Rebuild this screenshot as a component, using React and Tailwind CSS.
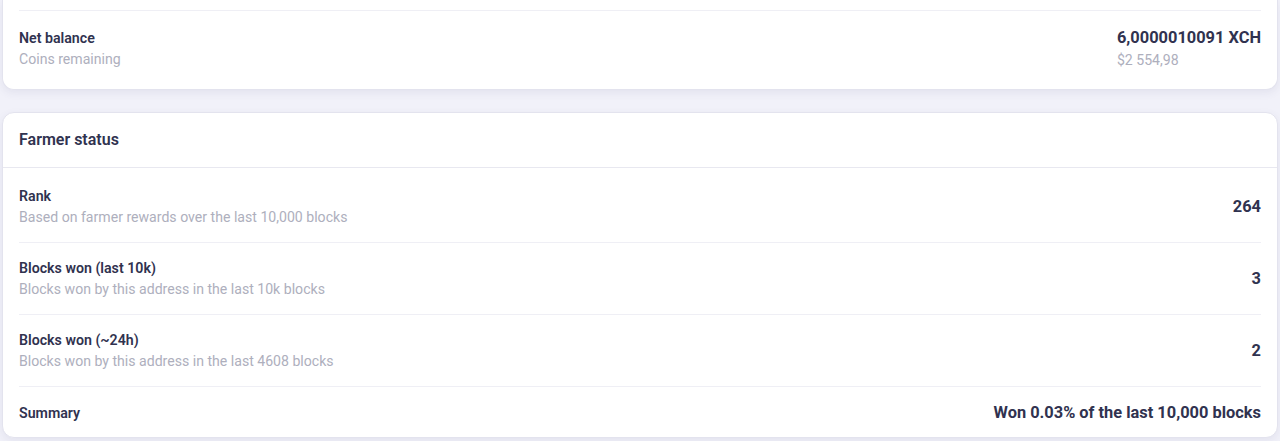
const rows = [
  {
    title: 'Rank',
    hint: 'Based on farmer rewards over the last 10,000 blocks',
    value: '264',
  },
  {
    title: 'Blocks won (last 10k)',
    hint: 'Blocks won by this address in the last 10k blocks',
    value: '3',
  },
  {
    title: 'Blocks won (~24h)',
    hint: 'Blocks won by this address in the last 4608 blocks',
    value: '2',
  },
];

function StatRow({ title, hint, value, first }) {
  return (
    <div
      className={`flex items-center justify-between border-b border-[#efeff5] ${
        first ? 'pt-[18px] pb-[15px]' : 'py-[15px]'
      }`}
    >
      <div>
        <div className="text-[14.2px] font-semibold leading-5 text-[#30324f]">{title}</div>
        <div className="mt-px text-[14.1px] leading-5 text-[#aeafbd]">{hint}</div>
      </div>
      <div className="pt-[2px] text-[16.4px] font-bold text-[#30324f]">{value}</div>
    </div>
  );
}

export default function App() {
  return (
    <div
      className="min-h-[441px] bg-[#f1f1f9] px-[2px]"
      style={{ fontFamily: 'Roboto, "Liberation Sans", sans-serif' }}
    >
      <div className="rounded-b-xl border border-t-0 border-[#e3e3ee] bg-white px-4 pt-[10px] shadow-[0_3px_8px_rgba(60,60,120,0.08)]">
        <div className="border-t border-[#efeff5]" />
        <div className="flex items-start justify-between pt-[16px] pb-[19px]">
          <div className="pt-px">
            <div className="text-[14.2px] font-semibold leading-5 text-[#30324f]">Net balance</div>
            <div className="mt-px text-[14.1px] leading-5 text-[#aeafbd]">Coins remaining</div>
          </div>
          <div className="text-left">
            <div className="text-[16.4px] font-bold leading-[21px] text-[#30324f]">
              6,0000010091 XCH
            </div>
            <div className="mt-[2px] text-[14.1px] leading-5 text-[#aeafbd]">$2 554,98</div>
          </div>
        </div>
      </div>

      <div className="mt-[22px] rounded-xl border border-[#e3e3ee] bg-white shadow-[0_3px_8px_rgba(60,60,120,0.08)]">
        <div className="border-b border-[#e8e8f0] px-4 py-[17px] text-[16px] font-semibold leading-5 text-[#30324f]">
          Farmer status
        </div>
        <div className="px-4">
          {rows.map((r, i) => (
            <StatRow key={r.title} {...r} first={i === 0} />
          ))}
          <div className="flex items-center justify-between pt-4 pb-[14px]">
            <div className="text-[14.2px] font-semibold leading-5 text-[#30324f]">Summary</div>
            <div className="text-[16.4px] font-bold leading-5 text-[#30324f]">
              Won 0.03% of the last 10,000 blocks
            </div>
          </div>
        </div>
      </div>
    </div>
  );
}
